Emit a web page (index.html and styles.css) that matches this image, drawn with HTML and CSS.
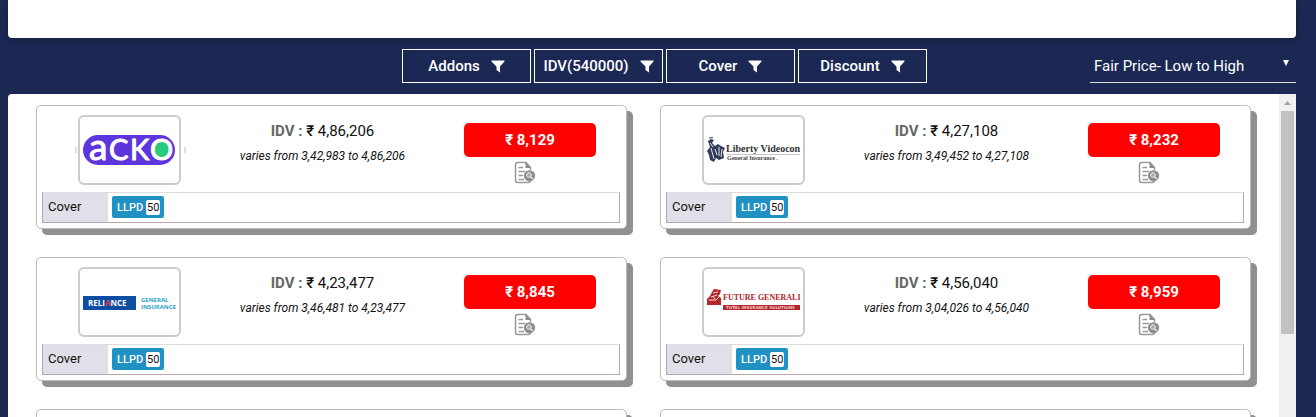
FILE: index.html
```
<!DOCTYPE html>
<html lang="en">
<head>
<meta charset="utf-8">
<title>Insurance quotes</title>
<link rel="stylesheet" href="styles.css">
</head>
<body>
<svg class="defs" aria-hidden="true">
  <symbol id="funnel" viewBox="0 0 14 13"><path d="M0.5 0.5H13.5V1.5L9 6.5V12.5L5.5 10V6.5L0.5 1.5Z" fill="#fff"/></symbol>
  <symbol id="breakup" viewBox="0 0 22 23">
    <path d="M13 1.5H3.5Q1.5 1.5 1.5 3.5V19.5Q1.5 21.5 3.5 21.5H14.5Q16 21.5 16.5 20M12 1.5L16.5 6.5V9" fill="none" stroke="#999" stroke-width="1.5"/>
    <path d="M11.5 1L17 7H11.5Z" fill="#8c8c8c"/>
    <path d="M4.5 6.5H9M4.5 10.5H11M4.5 14.5H9M4.5 18.5H10" stroke="#999" stroke-width="1.4"/>
    <circle cx="15.5" cy="14.8" r="5.6" fill="#8c8c8c"/>
    <circle cx="15" cy="14" r="2.3" fill="#aaa" stroke="#eee"/>
    <path d="M16.8 16L19 18" stroke="#eee" stroke-width="1.3"/>
  </symbol>
</svg>
<div class="page">
  <section class="summary"></section>
  <div class="toolbar">
    <div class="filters">
      <button class="filter" type="button">Addons<svg class="funnel"><use href="#funnel"/></svg></button>
      <button class="filter" type="button">IDV(540000)<svg class="funnel"><use href="#funnel"/></svg></button>
      <button class="filter" type="button">Cover<svg class="funnel"><use href="#funnel"/></svg></button>
      <button class="filter" type="button">Discount<svg class="funnel"><use href="#funnel"/></svg></button>
    </div>
    <div class="sort">
      <select class="sort-select" aria-label="Sort by"><option>Fair Price- Low to High</option></select>
      <svg class="caret" viewBox="0 0 6 6" aria-hidden="true"><path d="M0 0H6L3 6Z" fill="#fff"/></svg>
    </div>
  </div>
  <main class="results">
    <div class="cards">
      <article class="card">
        <div class="quote">
          <div class="logo">
            <svg class="logo-art" viewBox="0 0 99 66" role="img" aria-label="Acko">
              <rect x="3" y="18" width="92" height="30" rx="15" fill="#5c35dc"/>
              <circle cx="82" cy="33" r="9" fill="#27cb7c"/>
              <text class="acko" y="43"><tspan class="acko-small" x="9">a</tspan><tspan x="29">C</tspan><tspan x="50">K</tspan><tspan x="70">O</tspan></text>
              <path d="M-4 30V36M105 30V36" stroke="#c3b5f1"/>
            </svg>
          </div>
          <div class="idv">
            <p class="idv-value"><span class="idv-label">IDV :</span> <span class="rupee">₹</span> 4,86,206</p>
            <p class="idv-range">varies from 3,42,983 to 4,86,206</p>
          </div>
          <div class="buy">
            <button class="price" type="button">₹ 8,129</button>
            <svg class="breakup"><use href="#breakup"/></svg>
          </div>
        </div>
        <div class="cover"><span class="cover-name">Cover</span><span class="badge">LLPD <span class="badge-value">50</span></span></div>
      </article>
      <article class="card">
        <div class="quote">
          <div class="logo">
            <svg class="logo-art" viewBox="0 0 99 66" role="img" aria-label="Liberty Videocon General Insurance">
              <path d="M4 24L7 22L10 23L8 26L11 29L14 27L17 29L21 31L19 35L20 41L15 43L12 41L10 45L6 43L5 38L3 34L6 30Z" fill="#343b59"/>
              <path d="M7 31L10 42M11 32L13 38M15 30V39M18 32L17 40M6 26L9 30" stroke="#e4e6ee" fill="none"/>
              <path d="M5 21L9 20.500" stroke="#343b59"/>
              <text class="liberty" x="22" y="35">Liberty Videocon</text>
              <path d="M23 37.500H96" stroke="#aaa" stroke-width=".7"/>
              <text class="liberty-sub" x="23" y="43">General Insurance .</text>
            </svg>
          </div>
          <div class="idv">
            <p class="idv-value"><span class="idv-label">IDV :</span> <span class="rupee">₹</span> 4,27,108</p>
            <p class="idv-range">varies from 3,49,452 to 4,27,108</p>
          </div>
          <div class="buy">
            <button class="price" type="button">₹ 8,232</button>
            <svg class="breakup"><use href="#breakup"/></svg>
          </div>
        </div>
        <div class="cover"><span class="cover-name">Cover</span><span class="badge">LLPD <span class="badge-value">50</span></span></div>
      </article>
      <article class="card">
        <div class="quote">
          <div class="logo">
            <svg class="logo-art" viewBox="0 0 99 66" role="img" aria-label="Reliance General Insurance">
              <rect x="3" y="27" width="53" height="14" fill="#0d4da2"/>
              <text class="reliance" x="8" y="37">RELI<tspan fill="#e23b45">A</tspan>NCE</text>
              <text class="reliance-sub" x="61" y="33">GENERAL</text>
              <text class="reliance-sub" x="61" y="40">INSURANCE</text>
            </svg>
          </div>
          <div class="idv">
            <p class="idv-value"><span class="idv-label">IDV :</span> <span class="rupee">₹</span> 4,23,477</p>
            <p class="idv-range">varies from 3,46,481 to 4,23,477</p>
          </div>
          <div class="buy">
            <button class="price" type="button">₹ 8,845</button>
            <svg class="breakup"><use href="#breakup"/></svg>
          </div>
        </div>
        <div class="cover"><span class="cover-name">Cover</span><span class="badge">LLPD <span class="badge-value">50</span></span></div>
      </article>
      <article class="card">
        <div class="quote">
          <div class="logo">
            <svg class="logo-art" viewBox="0 0 99 66" role="img" aria-label="Future Generali Total Insurance Solutions">
              <path d="M3 30L6 27L8 23L10 20L17 21L16 25L14 27L17 29V36H3Z" fill="#b3262b"/>
              <path d="M9 24L14 23M7 28L13 26M5 31H12L15 28M9 27L11 30" stroke="#f4dede" fill="none"/>
              <text class="generali" x="19" y="31">FUTURE GENERALI</text>
              <rect x="19" y="36" width="77" height="5" fill="#b3262b"/>
              <text class="generali-sub" x="22" y="40">TOTAL INSURANCE SOLUTIONS</text>
            </svg>
          </div>
          <div class="idv">
            <p class="idv-value"><span class="idv-label">IDV :</span> <span class="rupee">₹</span> 4,56,040</p>
            <p class="idv-range">varies from 3,04,026 to 4,56,040</p>
          </div>
          <div class="buy">
            <button class="price" type="button">₹ 8,959</button>
            <svg class="breakup"><use href="#breakup"/></svg>
          </div>
        </div>
        <div class="cover"><span class="cover-name">Cover</span><span class="badge">LLPD <span class="badge-value">50</span></span></div>
      </article>
      <article class="card card-next"></article>
      <article class="card card-next"></article>
    </div>
    <div class="scrollbar" aria-hidden="true">
      <svg class="scroll-arrow" viewBox="0 0 17 17"><path d="M5 11H12L8.500 7Z" fill="#a3a3a3"/></svg>
      <div class="scroll-thumb"></div>
    </div>
  </main>
</div>
</body>
</html>
```

FILE: styles.css
```
* { box-sizing: border-box; }
body {
  margin: 0;
  background: #1c2854;
  font-family: Roboto, "Noto Sans", sans-serif;
  color: #111;
}
p { margin: 0; }
.defs { position: absolute; width: 0; height: 0; }
.page {
  display: flex;
  flex-direction: column;
  height: 100vh;
  padding: 0 20px 0 8px;
  overflow: hidden;
}
.summary {
  flex: none;
  height: 38px;
  background: #fff;
  border-radius: 0 0 4px 4px;
  box-shadow: 0 2px 6px rgba(0, 0, 0, .25);
}
.toolbar {
  flex: none;
  display: grid;
  grid-template-columns: 1fr auto 1fr;
  padding: 11px 0;
}
.filters {
  grid-column: 2;
  display: flex;
  gap: 3px;
  margin-left: 25px;
}
.filter {
  display: flex;
  align-items: center;
  justify-content: center;
  gap: 11px;
  width: 129px;
  height: 34px;
  padding: 0;
  border: 1px solid #fff;
  background: transparent;
  color: #fff;
  font: 500 15px/20px Roboto, sans-serif;
  white-space: nowrap;
}
.funnel { width: 14px; height: 13px; }
.sort {
  position: relative;
  justify-self: end;
  width: 206px;
}
.sort-select {
  appearance: none;
  width: 100%;
  height: 34px;
  padding: 0 24px 0 4px;
  border: 0;
  border-bottom: 1px solid #ddd;
  border-radius: 0;
  background: transparent;
  color: #fff;
  font: 400 15px/20px Roboto, sans-serif;
}
.caret {
  position: absolute;
  top: 11px;
  right: 7px;
  width: 6px;
  height: 6px;
  pointer-events: none;
}
.results {
  flex: 1;
  display: flex;
  min-height: 0;
  overflow: hidden;
  background: #fff;
  border-radius: 4px 0 0 0;
}
.cards {
  flex: 1;
  display: grid;
  grid-template-columns: 1fr 1fr;
  align-content: start;
  gap: 28px 33px;
  padding: 11px 28px 0 28px;
}
.card {
  padding: 9px 6px 5px 5px;
  border: 1px solid #bbb;
  border-radius: 5px;
  background: #fff;
  box-shadow: 6px 6px 0 #909090;
}
.card-next { height: 124px; }
.quote {
  display: flex;
  justify-content: space-between;
  height: 77px;
  padding: 0 24px 0 36px;
}
.logo {
  width: 103px;
  height: 70px;
  border: 2px solid #ccc;
  border-radius: 6px;
}
.logo-art { display: block; width: 99px; height: 66px; overflow: visible; }
.acko { fill: #fff; font: 400 29px Lato, sans-serif; stroke: #fff; stroke-width: 1px; }
.acko-small { font-size: 37px; }
.liberty { fill: #333; font: 700 10px "Liberation Serif", serif; }
.liberty-sub { fill: #444; font: 700 6px "Liberation Serif", serif; }
.reliance { fill: #fff; font: 700 8px "Open Sans", sans-serif; }
.reliance-sub { fill: #2ba3c5; font: 700 6px "Open Sans", sans-serif; }
.generali { fill: #b3262b; font: 700 8px "Liberation Serif", serif; }
.generali-sub { fill: #f0cccc; font: 700 4px "DejaVu Sans", sans-serif; }
.idv {
  width: 174px;
  padding-top: 5px;
  text-align: center;
  white-space: nowrap;
}
.idv-value { font-size: 15px; line-height: 22px; }
.idv-label { color: #666; font-weight: 700; }
.rupee { font-weight: 500; }
.idv-range { margin-top: 4px; font-size: 12px; line-height: 20px; font-style: italic; }
.buy {
  display: flex;
  flex-direction: column;
  align-items: center;
  width: 132px;
  padding-top: 8px;
}
.price {
  width: 100%;
  height: 34px;
  padding: 0;
  border: 0;
  border-radius: 5px;
  background: #f00;
  color: #fff;
  font: 700 15px/20px Roboto, sans-serif;
}
.breakup { width: 22px; height: 23px; margin: 4px 0 0 -10px; }
.cover {
  display: flex;
  height: 31px;
  border: 1px solid #b9a9ad;
  border-top-color: #ddd;
}
.cover-name {
  width: 65px;
  padding-left: 5px;
  background: #e1dfe7;
  font-size: 13px;
  line-height: 28px;
}
.badge {
  display: flex;
  align-items: center;
  gap: 3px;
  height: 22px;
  margin: 3px 0 0 4px;
  padding: 0 4px 0 5px;
  border-radius: 2px;
  background: #1f91c3;
  color: #fff;
  font-size: 11px;
  font-weight: 500;
}
.badge-value {
  padding: 0 1px;
  border-radius: 2px;
  background: #fff;
  color: #111;
  font-weight: 400;
  line-height: 15px;
}
.scrollbar { flex: none; width: 17px; background: #f1f1f1; }
.scroll-arrow { display: block; width: 17px; height: 17px; }
.scroll-thumb { width: 13px; height: 223px; margin-left: 2px; background: #c1c1c1; }
```
